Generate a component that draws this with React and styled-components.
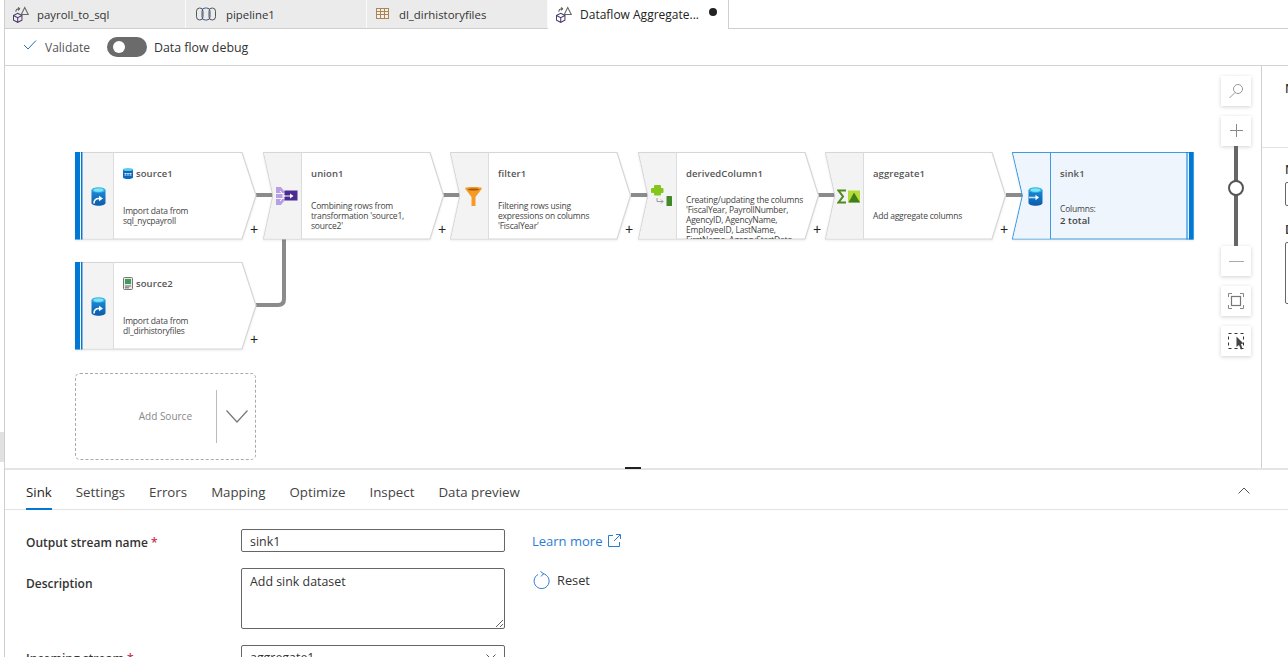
import React from 'react';
import styled, { createGlobalStyle } from 'styled-components';

const GlobalStyle = createGlobalStyle`
  html, body {
    margin: 0;
    padding: 0;
    background: #fff;
    overflow: hidden;
  }
  * {
    box-sizing: border-box;
  }
`;

const FONT = `'Open Sans', 'Noto Sans', sans-serif`;

/* ---------- small drawings ---------- */

const DataflowIcon = () => (
  <svg width="16" height="17" viewBox="0 0 17 18" fill="none">
    <path d="M0.500 10l4.500-2.300L9.500 10v5l-4.500 2.300L.5 15z" stroke="#4b3a6b" strokeWidth="1.100" />
    <path d="M0.500 10L5 12.300 9.500 10M5 12.300v5" stroke="#4b3a6b" strokeWidth="1.100" />
    <path d="M12.500 1.500l3.700 7.500H8.800z" stroke="#666" strokeWidth="1.100" />
    <path d="M3 6c0-2 1.500-3 4-3M5.500 1.500L7 3 5.500 4.500" stroke="#555" strokeWidth="1.100" />
  </svg>
);

const PipelineIcon = () => (
  <svg width="24" height="16" viewBox="0 0 24 16" fill="none">
    <rect x="2.500" y="2" width="6.500" height="12" rx="3.200" stroke="#555" />
    <rect x="8" y="2" width="8" height="12" rx="3.200" stroke="#3a5a8c" />
    <rect x="15" y="2" width="6.500" height="12" rx="3.200" stroke="#555" />
  </svg>
);

const TableIcon = () => (
  <svg width="16" height="14" viewBox="0 0 16 14" fill="none">
    <rect x="1.500" y="1.500" width="12" height="10" fill="#f7efe4" stroke="#a8865c" />
    <path d="M1.500 4.500h12M1.500 7.500h12M5.500 1.500v10M9.500 1.500v10" stroke="#a8865c" />
  </svg>
);

const CheckIcon = () => (
  <svg width="14" height="10" viewBox="0 0 14 10" fill="none">
    <path d="M1 5l4 4 8-8.500" stroke="#2a70b8" strokeWidth="1" />
  </svg>
);

const Barrel = ({ id, children }) => (
  <svg width="15" height="19" viewBox="0 0 15 19">
    <defs>
      <linearGradient id={id} x1="0" y1="0" x2="0" y2="1">
        <stop offset="0" stopColor="#1b8ad8" />
        <stop offset="1" stopColor="#0a5cab" />
      </linearGradient>
    </defs>
    <path d="M0.500 3v13c0 1.500 3 2.800 7 2.800s7-1.300 7-2.800V3z" fill={`url(#${id})`} />
    <ellipse cx="7.500" cy="3" rx="7" ry="2.800" fill="#2fb4e4" />
    <ellipse cx="7.500" cy="3" rx="5" ry="1.800" fill="#7fe3f5" />
    {children}
  </svg>
);

const SourceIcon = ({ id }) => (
  <Barrel id={id}>
    <path d="M3 16.500c0-3.500 2-5 5-5" fill="none" stroke="#fff" strokeWidth="1.600" />
    <path d="M8 8.800l4 2.700-4 2.700z" fill="#fff" />
  </Barrel>
);

const SinkIcon = () => (
  <Barrel id="sink-barrel">
    <path d="M1 10.500h7" stroke="#bfe6f7" strokeWidth="1.600" />
    <path d="M7.500 7.800l3.500 2.700-3.500 2.700z" fill="#fff" />
  </Barrel>
);

const UnionIcon = () => (
  <svg width="22" height="18" viewBox="0 0 22 18">
    <path d="M0 0h5l3.500 4.500V6H0z" fill="#b79fe6" />
    <rect x="0" y="7" width="8.500" height="4" fill="#b79fe6" />
    <path d="M0 12h8.500v1.500L5 18H0z" fill="#b79fe6" />
    <rect x="8.500" y="3.500" width="13" height="10" fill="#4c2c92" />
    <path d="M4 4l4.500 5L4 14M6 9h9" fill="none" stroke="#fff" strokeWidth="1" />
    <path d="M14 6.500l3.500 2.500-3.500 2.500z" fill="#fff" />
  </svg>
);

const FilterIcon = () => (
  <svg width="17" height="19" viewBox="0 0 17 19">
    <path d="M0 1.500c0-1 3.500-1.500 8.500-1.500s8.500.5 8.500 1.500L10.500 10v9h-4v-9z" fill="#f59b23" />
    <path d="M2.500 2.200c1-.5 3-.7 6-.7s5 .2 6 .7c-1 1-3 1.300-6 1.300s-5-.3-6-1.300z" fill="#a8560d" />
  </svg>
);

const DerivedIcon = () => (
  <svg width="22" height="22" viewBox="0 0 22 22">
    <path d="M4 0h5a1 1 0 0 1 1 1v2h1.500a1 1 0 0 1 1 1v3a1 1 0 0 1-1 1H10v1.500a1 1 0 0 1-1 1H4a1 1 0 0 1-1-1V8H1a1 1 0 0 1-1-1V4a1 1 0 0 1 1-1h2V1a1 1 0 0 1 1-1z" fill="#84c61a" />
    <path d="M6 13v3.500h6M10 14.500l2 2-2 2" fill="none" stroke="#9a9a9a" strokeWidth="1" />
    <rect x="15.500" y="11" width="5.500" height="10" rx="0.500" fill="#43882a" />
  </svg>
);

const AggregateIcon = () => (
  <svg width="24" height="15" viewBox="0 0 24 15">
    <path d="M9 1.500H1.500L6 7.500l-4.500 6H9" fill="none" stroke="#4e8a1e" strokeWidth="2" />
    <rect x="11" y="1.500" width="12" height="12" fill="#b6dc3a" />
    <path d="M17 3.500l6 10H11.500z" fill="#3f7d1d" />
  </svg>
);

const SqlBadge = () => (
  <svg width="10" height="11" viewBox="0 0 10 11">
    <path d="M0 1.500v8c0 .8 2.200 1.500 5 1.500s5-.7 5-1.500v-8z" fill="#0a6abf" />
    <ellipse cx="5" cy="1.500" rx="5" ry="1.500" fill="#5cc8ec" />
    <path d="M1.500 5.500h2M4.200 5.500h1.600M6.500 5.500h2M1.500 7h2M4.200 7h1.600M6.500 7h2" stroke="#fff" strokeWidth="0.900" />
  </svg>
);

const FileBadge = () => (
  <svg width="10" height="13" viewBox="0 0 10 13">
    <rect x="0.500" y="0.500" width="9" height="12" rx="1" fill="#e8e8e8" stroke="#777" />
    <rect x="2" y="2" width="6" height="5" fill="#3f9a55" />
    <path d="M2 9h6M2 10.800h4" stroke="#666" />
  </svg>
);

const ChevronDown = () => (
  <svg width="22" height="13" viewBox="0 0 22 13" fill="none">
    <path d="M0.500 0.500L11 12 21.500 0.500" stroke="#777" strokeWidth="1.200" />
  </svg>
);

const ChevronUp = () => (
  <svg width="12" height="7" viewBox="0 0 12 7" fill="none">
    <path d="M0.500 6.500L6 1l5.500 5.500" stroke="#555" />
  </svg>
);

const ExternalIcon = () => (
  <svg width="14" height="14" viewBox="0 0 14 14" fill="none" stroke="#2b7cd3">
    <path d="M6 1.500H1.500v11h11V8" />
    <path d="M7 7l6-6M9 .5h4.500V5" />
  </svg>
);

const ResetIcon = () => (
  <svg width="17" height="18" viewBox="0 0 17 18" fill="none" stroke="#2b7cd3">
    <path d="M5 3.500a7.500 7.500 0 1 0 5-.8" />
    <path d="M7.500 .5L10.500 2.700 8 5.500" />
  </svg>
);

const SearchIcon = () => (
  <svg width="16" height="16" viewBox="0 0 16 16" fill="none" stroke="#999">
    <circle cx="10" cy="6" r="4.500" />
    <path d="M7 9.500L1.500 15" />
  </svg>
);

const PlusIcon = () => (
  <svg width="15" height="15" viewBox="0 0 15 15" stroke="#8a8a8a">
    <path d="M7.500 0v13M1 6.500h13" />
  </svg>
);

const MinusIcon = () => (
  <svg width="15" height="3" viewBox="0 0 15 3" stroke="#aaa">
    <path d="M0 1.500h15" />
  </svg>
);

const FitIcon = () => (
  <svg width="16" height="16" viewBox="0 0 16 16" fill="none" stroke="#888">
    <path d="M.5 4V.5H4M12 .5h3.500V4M15.500 12v3.500H12M4 15.500H.5V12" />
    <rect x="3.500" y="3.500" width="9" height="9" stroke="#777" strokeWidth="1.200" />
  </svg>
);

const SelectIcon = () => (
  <svg width="17" height="17" viewBox="0 0 17 17">
    <rect x="0.500" y="0.500" width="15" height="15" fill="none" stroke="#333" strokeDasharray="3 3" />
    <path d="M8.500 3.500l7 7-2.500.5 1.500 5-1.500.5-2-4.500-2.500 2z" fill="#444" />
  </svg>
);

/* ---------- node outline, one per kind ---------- */

const NODE_SHAPES = {
  source: {
    outline: '0.500,0.500 167,0.500 181,43.500 167,87 0.500,87',
    cell: '8,1 38,1 38,86.500 8,86.500',
    fill: '#fff',
    cellFill: '#f3f3f3',
    stroke: '#d6d6d6',
  },
  step: {
    outline: '0.500,0.500 167,0.500 180.500,43.500 167,87 0.500,87 10,43.500',
    cell: '1,1 38,1 38,86.500 1,86.500 10.500,43.500',
    fill: '#fff',
    cellFill: '#f3f3f3',
    stroke: '#d6d6d6',
  },
  sink: {
    outline: '0.500,0.500 181,0.500 181,87 0.500,87 10.500,43.500',
    cell: '1,1 38.500,1 38.500,86.500 1,86.500 11,43.500',
    fill: '#eef5fc',
    cellFill: '#eef5fc',
    stroke: '#3d9be0',
  },
};

const NodeShape = ({ kind }) => {
  const shape = NODE_SHAPES[kind];
  return (
    <ShapeSvg width="182" height="88" viewBox="0 0 182 88">
      <polygon points={shape.outline} fill={shape.fill} stroke={shape.stroke} strokeWidth="1.200" />
      <polygon points={shape.cell} fill={shape.cellFill} />
      {kind === 'sink' ? (
        <>
          <path d="M38.500 0.500V87" stroke={shape.stroke} />
          <rect x="174.500" y="0" width="1" height="87.500" fill="#0078d4" />
          <rect x="177" y="0" width="4.500" height="87.500" fill="#0078d4" />
        </>
      ) : (
        <path d="M38.500 0.500V87" stroke="#dcdcdc" />
      )}
      {kind === 'source' && (
        <>
          <rect x="0" y="0" width="5" height="87.500" fill="#0078d4" />
          <rect x="6" y="0" width="1.500" height="87.500" fill="#0078d4" />
        </>
      )}
    </ShapeSvg>
  );
};

const Node = ({ x, y, kind, icon, badge, title, lines, top, strong }) => (
  <NodeBox $x={x} $y={y} $kind={kind}>
    <NodeShape kind={kind} />
    <IconCell $kind={kind}>{icon}</IconCell>
    <NodeBody>
      <NodeTitle>
        {badge}
        {title}
      </NodeTitle>
      <NodeDesc $top={top}>
        {lines.map((line) => (
          <DescLine key={line}>{line}</DescLine>
        ))}
        {strong && <DescStrong>{strong}</DescStrong>}
      </NodeDesc>
    </NodeBody>
    {kind !== 'sink' && <NodePlus>+</NodePlus>}
  </NodeBox>
);

const tabs = [
  { name: 'payroll_to_sql', icon: <DataflowIcon /> },
  { name: 'pipeline1', icon: <PipelineIcon /> },
  { name: 'dl_dirhistoryfiles', icon: <TableIcon /> },
];

const panelTabs = ['Sink', 'Settings', 'Errors', 'Mapping', 'Optimize', 'Inspect', 'Data preview'];

const App = () => (
  <Page>
    <GlobalStyle />
    <LeftEdge>
      <EdgePatch />
    </LeftEdge>
    <Main>
      <TabBar>
        {tabs.map((tab) => (
          <Tab key={tab.name}>
            {tab.icon}
            <span>{tab.name}</span>
          </Tab>
        ))}
        <Tab $active>
          <DataflowIcon />
          <span>Dataflow Aggregate...</span>
          <DirtyDot />
        </Tab>
      </TabBar>

      <Toolbar>
        <ValidateButton>
          <CheckIcon />
          <span>Validate</span>
        </ValidateButton>
        <Toggle>
          <ToggleKnob />
        </Toggle>
        <ToggleLabel>Data flow debug</ToggleLabel>
      </Toolbar>

      <Workspace>
        <Canvas>
          <WireSvg width="1256" height="402" viewBox="0 0 1256 402" fill="none" stroke="#8b8b8b" strokeWidth="4">
            <path d="M251 129H268M438 129H455M626 129H643M813 129H830M1001 129H1019" />
            <path d="M279 173V233Q279 239 273 239H251" />
          </WireSvg>

          <Node
            kind="source"
            x={70}
            y={86}
            icon={<SourceIcon id="source-a" />}
            badge={<SqlBadge />}
            title="source1"
            lines={['Import data from', 'sql_nycpayroll']}
          />
          <Node
            kind="step"
            x={258}
            y={86}
            icon={<UnionIcon />}
            title="union1"
            lines={['Combining rows from', "transformation 'source1,", "source2'"]}
          />
          <Node
            kind="step"
            x={445}
            y={86}
            icon={<FilterIcon />}
            title="filter1"
            lines={['Filtering rows using', 'expressions on columns', "'FiscalYear'"]}
          />
          <Node
            kind="step"
            x={633}
            y={86}
            icon={<DerivedIcon />}
            title="derivedColumn1"
            top
            lines={[
              'Creating/updating the columns',
              "'FiscalYear, PayrollNumber,",
              'AgencyID, AgencyName,',
              'EmployeeID, LastName,',
              'FirstName, AgencyStartDate',
            ]}
          />
          <Node
            kind="step"
            x={820}
            y={86}
            icon={<AggregateIcon />}
            title="aggregate1"
            lines={['Add aggregate columns']}
          />
          <Node
            kind="sink"
            x={1007}
            y={86}
            icon={<SinkIcon />}
            title="sink1"
            lines={['Columns:']}
            strong="2 total"
          />
          <Node
            kind="source"
            x={70}
            y={196}
            icon={<SourceIcon id="source-b" />}
            badge={<FileBadge />}
            title="source2"
            lines={['Import data from', 'dl_dirhistoryfiles']}
          />

          <AddSource>
            <AddSourceLabel>Add Source</AddSourceLabel>
            <AddSourceRule />
            <ChevronDown />
          </AddSource>

          <ZoomControls>
            <ZoomButton>
              <SearchIcon />
            </ZoomButton>
            <ZoomStack>
              <ZoomButton>
                <PlusIcon />
              </ZoomButton>
              <ZoomTrack>
                <ZoomKnob />
              </ZoomTrack>
              <ZoomButton>
                <MinusIcon />
              </ZoomButton>
            </ZoomStack>
            <ZoomButton>
              <FitIcon />
            </ZoomButton>
            <ZoomButton>
              <SelectIcon />
            </ZoomButton>
          </ZoomControls>
        </Canvas>

        <SidePanel>
          <SideHeader>
            <SideLabel>Name</SideLabel>
          </SideHeader>
          <SideForm>
            <SideLabel>Name</SideLabel>
            <SideInput />
            <SideLabel $gap>Description</SideLabel>
            <SideInput $tall />
          </SideForm>
        </SidePanel>
      </Workspace>

      <Splitter>
        <SplitterHandle />
      </Splitter>

      <BottomPanel>
        <PanelTabs>
          {panelTabs.map((name, i) => (
            <PanelTab key={name} $active={i === 0}>
              {name}
            </PanelTab>
          ))}
          <Collapse>
            <ChevronUp />
          </Collapse>
        </PanelTabs>

        <Form>
          <FieldLabel>
            Output stream name <Required>*</Required>
          </FieldLabel>
          <TextInput readOnly value="sink1" />
          <LinkAction>
            Learn more <ExternalIcon />
          </LinkAction>

          <FieldLabel $offset={7}>Description</FieldLabel>
          <TextArea readOnly value="Add sink dataset" />
          <ResetAction>
            <ResetIcon />
            <span>Reset</span>
          </ResetAction>

          <FieldLabel>
            Incoming stream <Required>*</Required>
          </FieldLabel>
          <SelectBox>
            <span>aggregate1</span>
            <svg width="10" height="6" viewBox="0 0 10 6" fill="none" stroke="#555">
              <path d="M.5 .5L5 5 9.500 .5" />
            </svg>
          </SelectBox>
        </Form>
      </BottomPanel>
    </Main>
  </Page>
);

export default App;

const Page = styled.div`
  display: flex;
  width: 1288px;
  height: 657px;
  overflow: hidden;
  background: #fff;
  font-family: ${FONT};
  color: #333;
`;

const LeftEdge = styled.div`
  flex: 0 0 4px;
  padding-top: 432px;
`;

const EdgePatch = styled.div`
  height: 30px;
  background: #e1e1e1;
`;

const Main = styled.div`
  flex: 1;
  min-width: 0;
  display: flex;
  flex-direction: column;
  border-left: 1px solid #cfcfcf;
`;

const TabBar = styled.div`
  display: flex;
  height: 29px;
  border-bottom: 1px solid #cfcfcf;
`;

const Tab = styled.div`
  position: relative;
  display: flex;
  align-items: center;
  gap: 8px;
  flex: 0 0 181px;
  height: ${(p) => (p.$active ? '29px' : '28px')};
  padding-left: 8px;
  font-size: ${(p) => (p.$active ? '12px' : '11.4px')};
  color: ${(p) => (p.$active ? '#222' : '#333')};
  background: ${(p) => (p.$active ? '#fff' : '#ebebeb')};
  border-right: 1px solid ${(p) => (p.$active ? '#cfcfcf' : '#fafafa')};
  white-space: nowrap;
`;

const DirtyDot = styled.i`
  position: absolute;
  left: 161px;
  top: 8px;
  width: 8px;
  height: 8px;
  border-radius: 50%;
  background: #222;
`;

const Toolbar = styled.div`
  display: flex;
  align-items: center;
  height: 37px;
  padding-left: 18px;
  border-bottom: 1px solid #d2d2d2;
  font-size: 12.4px;
`;

const ValidateButton = styled.div`
  display: flex;
  align-items: center;
  gap: 8px;
  margin-right: 17px;
  font-size: 12px;
  color: #555;

  svg {
    margin-top: -5px;
  }
`;

const Toggle = styled.div`
  display: flex;
  align-items: center;
  width: 40px;
  height: 20px;
  padding-left: 6px;
  border-radius: 10px;
  background: #6b6b6b;
`;

const ToggleKnob = styled.i`
  width: 12px;
  height: 12px;
  border-radius: 50%;
  background: #fff;
`;

const ToggleLabel = styled.span`
  margin-left: 7px;
`;

const Workspace = styled.div`
  display: flex;
  height: 402px;
`;

const Canvas = styled.div`
  position: relative;
  flex: 0 0 1256px;
  overflow: hidden;
`;

const WireSvg = styled.svg`
  position: absolute;
  left: 0;
  top: 0;
`;

const NodeBox = styled.div`
  position: absolute;
  left: ${(p) => p.$x}px;
  top: ${(p) => p.$y}px;
  display: flex;
  width: 182px;
  height: 88px;
  padding-left: ${(p) => (p.$kind === 'source' ? '8px' : '0')};
`;

const ShapeSvg = styled.svg`
  position: absolute;
  left: 0;
  top: 0;
  filter: drop-shadow(0 1px 1px rgba(0, 0, 0, 0.08));
`;

const IconCell = styled.div`
  position: relative;
  flex: 0 0 ${(p) => (p.$kind === 'source' ? '31px' : '39px')};
  display: flex;
  align-items: center;
  justify-content: center;
  padding-left: ${(p) => (p.$kind === 'source' ? '0' : '8px')};
`;

const NodeBody = styled.div`
  position: relative;
  flex: 1;
  min-width: 0;
  padding: 14px 0 0 9px;
  height: 87px;
  overflow: hidden;
`;

const NodeTitle = styled.div`
  display: flex;
  align-items: center;
  gap: 3px;
  height: 14px;
  font-size: 9.5px;
  font-weight: 600;
  letter-spacing: 0.1px;
  color: #555;
`;

const NodeDesc = styled.div`
  display: flex;
  flex-direction: column;
  justify-content: ${(p) => (p.$top ? 'flex-start' : 'center')};
  height: 44px;
  margin-top: ${(p) => (p.$top ? '15px' : '14px')};
  font-size: 8.5px;
  letter-spacing: -0.2px;
  line-height: 10px;
  color: #444;
`;

const DescLine = styled.div`
  white-space: nowrap;
`;

const DescStrong = styled.div`
  margin: 2px 0;
  font-size: 9.5px;
  font-weight: 600;
  letter-spacing: 0.1px;
  color: #444;
`;

const NodePlus = styled.span`
  position: absolute;
  left: 175px;
  top: 69px;
  font: 14px/16px 'Liberation Sans', sans-serif;
  color: #222;
`;

const AddSource = styled.div`
  position: absolute;
  left: 70px;
  top: 307px;
  display: flex;
  align-items: center;
  justify-content: flex-end;
  width: 181px;
  height: 87px;
  padding-right: 7px;
  border: 1px dashed #aaa;
  border-radius: 5px;
`;

const AddSourceLabel = styled.span`
  margin: -2px 24px 0 0;
  font-size: 10px;
  color: #888;
`;

const AddSourceRule = styled.i`
  width: 1px;
  height: 53px;
  margin-right: 9px;
  background: #bbb;
`;

const ZoomControls = styled.div`
  position: absolute;
  right: 10px;
  top: 10px;
  display: flex;
  flex-direction: column;
  gap: 10px;
  width: 30px;
`;

const ZoomStack = styled.div`
  display: flex;
  flex-direction: column;
`;

const ZoomButton = styled.div`
  display: flex;
  align-items: center;
  justify-content: center;
  width: 30px;
  height: 30px;
  background: #fff;
  box-shadow: 0 1px 4px rgba(0, 0, 0, 0.18);
`;

const ZoomTrack = styled.div`
  position: relative;
  width: 4px;
  height: 100px;
  margin-left: 13px;
  background: #666;
`;

const ZoomKnob = styled.i`
  position: absolute;
  left: -6px;
  top: 34px;
  width: 16px;
  height: 16px;
  border: 2px solid #555;
  border-radius: 50%;
  background: #fff;
`;

const SidePanel = styled.div`
  flex: 1;
  border-left: 1px solid #cfcfcf;
  overflow: hidden;
`;

const SideHeader = styled.div`
  height: 82px;
  padding: 15px 0 0 23px;
  border-bottom: 1px solid #e3e3e3;
`;

const SideForm = styled.div`
  padding: 14px 0 0 23px;
`;

const SideLabel = styled.div`
  width: 60px;
  margin-top: ${(p) => (p.$gap ? '16px' : '0')};
  font-size: 12px;
  line-height: 16px;
  font-weight: 600;
  color: #333;
`;

const SideInput = styled.div`
  width: 60px;
  height: ${(p) => (p.$tall ? '62px' : '24px')};
  margin-top: 4px;
  border: 1px solid #666;
  border-radius: 2px;
`;

const Splitter = styled.div`
  height: 2px;
  padding-left: 620px;
  background: #e4e4e4;
`;

const SplitterHandle = styled.i`
  display: block;
  width: 16px;
  height: 2px;
  margin-top: -1px;
  background: #222;
`;

const BottomPanel = styled.div`
  flex: 1;
  min-height: 0;
  overflow: hidden;
`;

const PanelTabs = styled.div`
  display: flex;
  gap: 24px;
  height: 40px;
  padding: 0 38px 0 21px;
  border-bottom: 1px solid #e3e3e3;
`;

const PanelTab = styled.div`
  height: 40px;
  padding-top: 13px;
  font-size: 13.3px;
  line-height: 18px;
  color: ${(p) => (p.$active ? '#222' : '#444')};
  border-bottom: 2px solid ${(p) => (p.$active ? '#0078d4' : 'transparent')};
`;

const Collapse = styled.div`
  display: flex;
  align-items: flex-start;
  margin-left: auto;
  padding-top: 17px;
`;

const Form = styled.div`
  display: grid;
  grid-template-columns: 215px 264px auto;
  grid-auto-rows: min-content;
  row-gap: 16px;
  padding: 19px 0 0 21px;
  font-size: 13px;
`;

const FieldLabel = styled.div`
  padding-top: ${(p) => p.$offset || 5}px;
  font-size: 12px;
  line-height: 18px;
  font-weight: 600;
  color: #333;
`;

const Required = styled.span`
  color: #c4314b;
`;

const fieldStyle = `
  display: block;
  width: 264px;
  border: 1px solid #666;
  border-radius: 2px;
  padding: 0 8px;
  font-family: ${FONT};
  font-size: 12.4px;
  color: #333;
  background: #fff;
  outline: none;
`;

const TextInput = styled.input`
  ${fieldStyle}
  height: 23px;
  padding-top: 1px;
`;

const TextArea = styled.textarea`
  ${fieldStyle}
  height: 61px;
  padding-top: 4px;
  resize: vertical;
`;

const SelectBox = styled.div`
  ${fieldStyle}
  display: flex;
  align-items: center;
  justify-content: space-between;
  height: 24px;
`;

const LinkAction = styled.div`
  display: flex;
  align-items: center;
  gap: 5px;
  height: 23px;
  margin-left: 27px;
  color: #2b7cd3;
`;

const ResetAction = styled.div`
  display: flex;
  align-items: flex-start;
  gap: 7px;
  margin: 3px 0 0 28px;
  font-size: 12.8px;
  color: #333;
`;
